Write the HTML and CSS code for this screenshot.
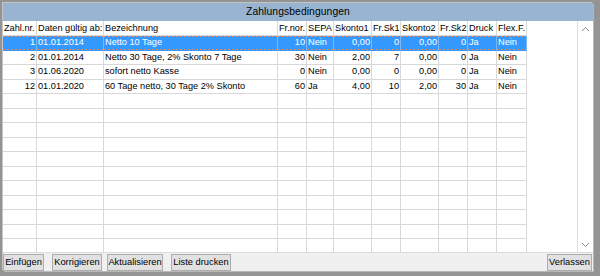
FILE: index.html
```html
<!DOCTYPE html>
<html lang="de">
<head>
<meta charset="utf-8">
<title>Zahlungsbedingungen</title>
<link rel="stylesheet" href="styles.css">
</head>
<body>
<div class="window">
  <div class="title">Zahlungsbedingungen</div>
  <div class="content">
    <div class="grid">
      <table>
        <colgroup>
          <col class="c1"><col class="c2"><col class="c3"><col class="c4"><col class="c5"><col class="c6"><col class="c7"><col class="c8"><col class="c9"><col class="c10"><col class="c11">
        </colgroup>
        <thead>
          <tr class="head">
            <td>Zahl.nr.</td><td>Daten gültig ab:</td><td>Bezeichnung</td><td>Fr.nor.</td><td>SEPA</td><td>Skonto1</td><td>Fr.Sk1</td><td>Skonto2</td><td>Fr.Sk2</td><td>Druck</td><td>Flex.F.</td>
          </tr>
        </thead>
        <tbody>
          <tr class="sel">
            <td class="r">1</td><td>01.01.2014</td><td>Netto 10 Tage</td><td class="r">10</td><td>Nein</td><td class="r">0,00</td><td class="r">0</td><td class="r">0,00</td><td class="r">0</td><td>Ja</td><td>Nein</td>
          </tr>
          <tr>
            <td class="r">2</td><td>01.01.2014</td><td>Netto 30 Tage, 2% Skonto 7 Tage</td><td class="r">30</td><td>Nein</td><td class="r">2,00</td><td class="r">7</td><td class="r">0,00</td><td class="r">0</td><td>Ja</td><td>Nein</td>
          </tr>
          <tr>
            <td class="r">3</td><td>01.06.2020</td><td>sofort netto Kasse</td><td class="r">0</td><td>Nein</td><td class="r">0,00</td><td class="r">0</td><td class="r">0,00</td><td class="r">0</td><td>Ja</td><td>Nein</td>
          </tr>
          <tr>
            <td class="r">12</td><td>01.01.2020</td><td>60 Tage netto, 30 Tage 2% Skonto</td><td class="r">60</td><td>Ja</td><td class="r">4,00</td><td class="r">10</td><td class="r">2,00</td><td class="r">30</td><td>Ja</td><td>Nein</td>
          </tr>
          <tr><td></td><td></td><td></td><td></td><td></td><td></td><td></td><td></td><td></td><td></td><td></td></tr>
          <tr><td></td><td></td><td></td><td></td><td></td><td></td><td></td><td></td><td></td><td></td><td></td></tr>
          <tr><td></td><td></td><td></td><td></td><td></td><td></td><td></td><td></td><td></td><td></td><td></td></tr>
          <tr><td></td><td></td><td></td><td></td><td></td><td></td><td></td><td></td><td></td><td></td><td></td></tr>
          <tr><td></td><td></td><td></td><td></td><td></td><td></td><td></td><td></td><td></td><td></td><td></td></tr>
          <tr><td></td><td></td><td></td><td></td><td></td><td></td><td></td><td></td><td></td><td></td><td></td></tr>
          <tr><td></td><td></td><td></td><td></td><td></td><td></td><td></td><td></td><td></td><td></td><td></td></tr>
          <tr><td></td><td></td><td></td><td></td><td></td><td></td><td></td><td></td><td></td><td></td><td></td></tr>
          <tr><td></td><td></td><td></td><td></td><td></td><td></td><td></td><td></td><td></td><td></td><td></td></tr>
          <tr><td></td><td></td><td></td><td></td><td></td><td></td><td></td><td></td><td></td><td></td><td></td></tr>
          <tr><td></td><td></td><td></td><td></td><td></td><td></td><td></td><td></td><td></td><td></td><td></td></tr>
        </tbody>
      </table>
    </div>
    <div class="scroll">
      <div class="arrow">
        <svg width="9" height="6" viewBox="0 0 9 6"><path d="M1 5 L4.5 1.5 L8 5" fill="none" stroke="#8a8a8a" stroke-width="1"/></svg>
      </div>
      <div class="track"></div>
      <div class="arrow">
        <svg width="9" height="6" viewBox="0 0 9 6"><path d="M1 1 L4.5 4.5 L8 1" fill="none" stroke="#8a8a8a" stroke-width="1"/></svg>
      </div>
    </div>
  </div>
  <div class="buttons">
    <button class="btn b1">Einfügen</button>
    <button class="btn b2">Korrigieren</button>
    <button class="btn b3">Aktualisieren</button>
    <button class="btn b4">Liste drucken</button>
    <button class="btn b5">Verlassen</button>
  </div>
</div>
</body>
</html>
```
FILE: styles.css
```css
html, body {
  margin: 0;
  padding: 0;
}
body {
  width: 600px;
  height: 276px;
  background: #949494;
  font-family: "Liberation Sans", Arial, sans-serif;
  font-size: 9.2px;
  color: #000;
  overflow: hidden;
}
.window {
  margin: 3px 7px 5px 3px;
  height: 268px;
  background: #f0f0f0;
  display: flex;
  flex-direction: column;
  box-shadow: -1px -1px 0 #c4c4c4, 1px 1px 0 #b8b8b8;
}
.title {
  height: 18px;
  line-height: 18px;
  background: #99b4d1;
  text-align: center;
  font-size: 10.3px;
  color: #000;
  letter-spacing: 0.1px;
}
.content {
  height: 232px;
  display: flex;
  background: #fff;
  overflow: hidden;
}
.grid {
  flex: 1;
  overflow: hidden;
  background: #fff;
}
table {
  table-layout: fixed;
  width: 524px;
  border-collapse: separate;
  border-spacing: 0;
}
.c1 { width: 34px; }
.c2 { width: 67px; }
.c3 { width: 174px; }
.c4 { width: 29px; }
.c5 { width: 27px; }
.c6 { width: 38px; }
.c7 { width: 29px; }
.c8 { width: 38px; }
.c9 { width: 29px; }
.c10 { width: 29px; }
.c11 { width: 30px; }
td {
  padding: 0 1px 0 1px;
  border-right: 1px solid #d8d8d8;
  border-bottom: 1px solid #d8d8d8;
  white-space: nowrap;
  overflow: hidden;
  line-height: 13px;
  box-sizing: border-box;
}
tbody td {
  height: 14.5px;
}
.head td {
  height: 15px;
  line-height: 14px;
}
td.r {
  text-align: right;
  padding: 0 1px 0 0;
}
.sel td {
  color: #fff;
  border-right-color: #7ab8f5;
  border-bottom-color: transparent;
  background-color: #3399ff;
  background-image:
    repeating-linear-gradient(to right, #f0844a 0 2px, transparent 2px 4px),
    repeating-linear-gradient(to right, #f0844a 0 2px, transparent 2px 4px);
  background-size: 100% 1px, 100% 1px;
  background-position: 0 0, 0 100%;
  background-repeat: no-repeat;
}
.scroll {
  width: 15px;
  border-left: 1px solid #dedede;
  background: #fff;
  display: flex;
  flex-direction: column;
}
.arrow {
  height: 15px;
  display: flex;
  align-items: center;
  justify-content: center;
}
.track {
  flex: 1;
}
.buttons {
  height: 18px;
  display: flex;
  align-items: center;
  background: #f0f0f0;
  border-top: 1px solid #dcdcdc;
}
.btn {
  height: 17px;
  margin: 0;
  padding: 0;
  font-family: inherit;
  font-size: 9.3px;
  color: #000;
  background: #e1e1e1;
  border: 1px solid #adadad;
  line-height: 15px;
}
.b1 { width: 41px; margin-left: 0; }
.b2 { width: 50px; margin-left: 8px; }
.b3 { width: 56px; margin-left: 5px; }
.b4 { width: 60px; margin-left: 8px; }
.b5 { width: 45px; margin-left: auto; margin-right: 1px; }
```
